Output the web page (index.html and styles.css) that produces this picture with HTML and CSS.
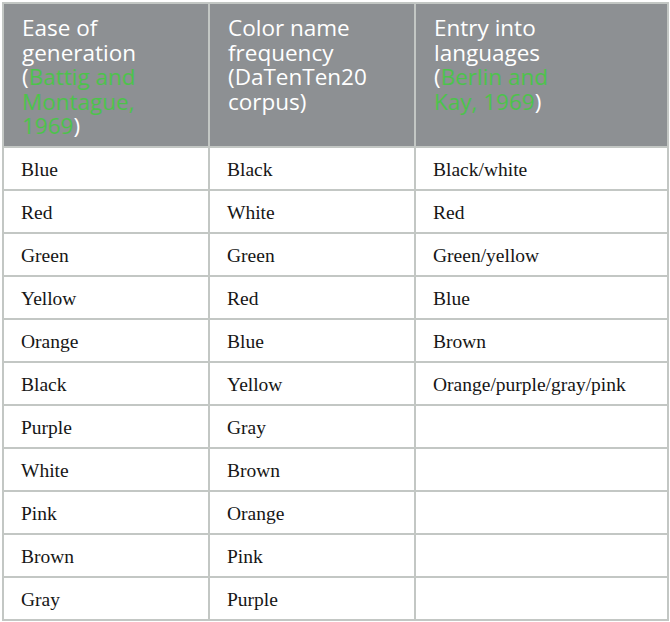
FILE: index.html
```html
<!DOCTYPE html>
<html>
<head>
<meta charset="utf-8">
<link rel="stylesheet" href="styles.css">
</head>
<body>
<table class="colors">
  <colgroup>
    <col class="c1"><col class="c2"><col class="c3">
  </colgroup>
  <thead>
    <tr class="head-row">
      <th>Ease of generation (<span class="ref">Battig and Montague, 1969</span>)</th>
      <th>Color name frequency (DaTenTen20 corpus)</th>
      <th>Entry into languages (<span class="ref">Berlin and Kay, 1969</span>)</th>
    </tr>
  </thead>
  <tbody>
    <tr><td>Blue</td><td>Black</td><td>Black/white</td></tr>
    <tr><td>Red</td><td>White</td><td>Red</td></tr>
    <tr><td>Green</td><td>Green</td><td>Green/yellow</td></tr>
    <tr><td>Yellow</td><td>Red</td><td>Blue</td></tr>
    <tr><td>Orange</td><td>Blue</td><td>Brown</td></tr>
    <tr><td>Black</td><td>Yellow</td><td>Orange/purple/gray/pink</td></tr>
    <tr><td>Purple</td><td>Gray</td><td></td></tr>
    <tr><td>White</td><td>Brown</td><td></td></tr>
    <tr><td>Pink</td><td>Orange</td><td></td></tr>
    <tr><td>Brown</td><td>Pink</td><td></td></tr>
    <tr><td>Gray</td><td>Purple</td><td></td></tr>
  </tbody>
</table>
</body>
</html>
```
FILE: styles.css
```css
html, body {
  margin: 0;
  padding: 0;
  background: #ffffff;
}
.colors {
  margin: 2px 0 0 2px;
  border-collapse: collapse;
  table-layout: fixed;
  width: 665px;
  border: 2px solid #c3c7c4;
}
.c1 { width: 206px; }
.c2 { width: 206px; }
.c3 { width: 253px; }
.colors th, .colors td {
  border: 2px solid #c3c7c4;
  text-align: left;
}
.head-row { height: 144px; }
.colors th {
  background: #8d9093;
  color: #ffffff;
  font-family: "Open Sans", "Lato", sans-serif;
  font-weight: 400;
  font-size: 22.5px;
  line-height: 24.5px;
  vertical-align: top;
  padding: 12px 0 0 18px;
}
.colors th:nth-child(1) { padding-right: 38px; }
.colors th:nth-child(2) { padding-right: 38px; }
.colors th:nth-child(3) { padding-right: 80px; }
.colors th .ref {
  color: #4cc34b;
}
.colors tbody tr { height: 43px; }
.colors td {
  font-family: "Liberation Serif", "Times New Roman", serif;
  font-size: 19.5px;
  color: #161616;
  padding: 3px 17px 0 17px;
  vertical-align: middle;
}
```
